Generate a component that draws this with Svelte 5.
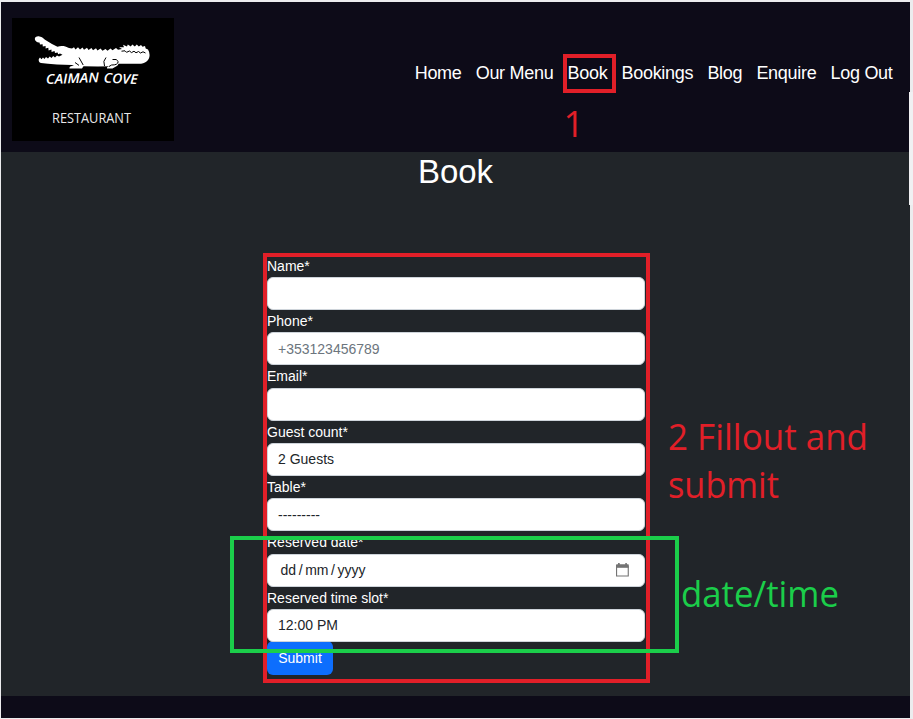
<script>
  const links = ['Home', 'Our Menu', 'Book', 'Bookings', 'Blog', 'Enquire', 'Log Out'];
  const fields = [
    { label: 'Name*', value: '' },
    { label: 'Phone*', value: '+353123456789', kind: 'placeholder' },
    { label: 'Email*', value: '' },
    { label: 'Guest count*', value: '2 Guests' },
    { label: 'Table*', value: '---------' },
    { label: 'Reserved date*', value: 'dd / mm / yyyy', kind: 'date' },
    { label: 'Reserved time slot*', value: '12:00 PM' }
  ];
</script>

<div class="frame">
  <div class="page">
    <header>
      <svg class="logo" width="162" height="123" viewBox="12 18 162 123" aria-label="Caiman Cove Restaurant">
        <rect x="12" y="18" width="162" height="123" fill="#000" />
        <path fill="#fff" d="M34.8 39C34.8 36.8 37 36 39.5 36.4C42.5 36.6 43.3 38.6 45 39.7L52 44L57.5 46.8C60.5 45.4 65 45.6 69 48L72 48.5L74 47.3L75.5 49.4L78 47.3L80 49.4L82.5 47.5L84 49.7L87 47.7L88.5 50L91.5 48L93 50.3L96 48.2L97.5 50.5L100.5 48.6L102.5 50.8L105.5 48.9L107.5 50.7L110.5 48.4L112.5 50.3L116 48L118 49.7L122 49L119 47.2L124 47.3L123 44.8L127 46.5L127.8 44.6L130.8 46.4L132.3 44.6L134.8 46.4L136.8 44.6L138.8 46.4L141 44.9L142.5 46.8L145 46.1L145.7 48.4L148 49.4Q149.6 52 149.6 55C149.6 60.5 145 63.8 139 63.8L118.5 63.8C118 66.2 115.5 66.5 112.5 68.6L107 68.4C106.5 67 108 66.4 110 66.2L98 66.6L83.5 66.2L82 68.6L69.5 68.6C69 67 70.6 66 74 65.6L72 65L57 64.6L48 63.8L41 63C39 62.6 38.4 60.7 38.8 59L40 57.6L41.5 59.3L43 57.4L44.5 59L46 57L48 58.6L49.7 56.5L51.5 58L53.2 56L55 57.4L57 55.4L59 56.4L62.5 54.8L60 53.6L58.2 54.2L57.6 52.4L55 53L54.5 50.9L51.6 52L51.4 49.6L48.6 50.4L48.3 47.8L45.6 48.6L45.6 46L42.8 46.6L42.6 44.2L40 44.6L39.5 42.4C37.5 42.8 35.2 41.4 34.8 39Z" />
        <path d="M79 57.5L83.2 65M75 62.5L79 65.4M106 57.5Q102.5 61 104.5 66M112.5 59.5Q117 58.5 118.2 61.5Q118 65.2 111.5 65L109 66.5M121.5 51.2L125 50.8L126.5 52.3L129.5 51L131.5 52.6L134 51.2L136 52.8L138.5 51.5L140.5 53L143 51.8L145.5 53" fill="none" stroke="#000" stroke-width="1" />
        <text class="cove" x="46" y="84" textLength="53" lengthAdjust="spacingAndGlyphs" transform="rotate(-2 46 84)">CAIMAN</text>
        <text class="cove" x="103.5" y="82.6" textLength="34" lengthAdjust="spacingAndGlyphs" transform="rotate(2.5 103 82)">COVE</text>
        <text class="restaurant" x="52" y="123.2" textLength="79" lengthAdjust="spacingAndGlyphs">RESTAURANT</text>
      </svg>
      <nav>
        {#each links as link}<span>{link}</span>{/each}
      </nav>
    </header>
    <main>
      <h1>Book</h1>
      <form>
        {#each fields as field}
          <div class="group">
            <div class="label">{field.label}</div>
            <div class="control {field.kind ?? ''}">
              <span>{field.value}</span>
              {#if field.kind === 'date'}
                <svg width="13" height="14" viewBox="0 0 14 15"><path d="M.6 4H13.2V14H.6Z" fill="none" stroke="#747474" stroke-width="1.2" /><path d="M0 2Q0 1.2 1 1.2H2.2V0H4V1.2H10V0H11.7V1.2H13Q13.8 1.2 13.8 2V5H0Z" fill="#747474" /></svg>
              {/if}
            </div>
          </div>
        {/each}
        <button type="button">Submit</button>
      </form>
    </main>
    <footer></footer>
  </div>
  <div class="scroll"></div>
  <svg class="notes" width="913" height="719">
    <g fill="none" stroke-width="4">
      <rect x="565" y="56" width="49" height="35" stroke="#e11f28" />
      <rect x="265" y="255" width="383" height="426" stroke="#e11f28" />
      <rect x="232" y="538" width="445" height="113" stroke="#1bce4a" />
    </g>
    <g class="note" fill="#e11f28">
      <text x="563.5" y="137">1</text>
      <text x="668" y="450" textLength="200" lengthAdjust="spacingAndGlyphs">2 Fillout and</text>
      <text x="668" y="498" textLength="111" lengthAdjust="spacingAndGlyphs">submit</text>
      <text x="681" y="607" fill="#1bce4a" textLength="158" lengthAdjust="spacingAndGlyphs">date/time</text>
    </g>
  </svg>
</div>

<style>
  :global(body) { margin: 0; overflow: hidden; }
  .frame { position: relative; box-sizing: border-box; width: 913px; height: 719px; padding: 2px 3px 1px 1px; background: #ececee; overflow: hidden; font-family: "Liberation Sans", Arial, sans-serif; color: #fff; }
  .page { display: flex; flex-direction: column; height: 716px; }
  header { box-sizing: border-box; height: 150px; flex: none; display: flex; justify-content: space-between; align-items: flex-start; padding: 16px 17.5px 0 11px; background: #0d0b18; }
  .logo { display: block; }
  .cove { font: italic 600 13.5px "Open Sans", sans-serif; fill: #fff; }
  .restaurant { font: 13.7px "Open Sans", sans-serif; fill: #e8e8e8; }
  nav { display: flex; gap: 14.2px; padding-top: 44px; font-size: 18px; line-height: 22px; letter-spacing: -0.3px; white-space: nowrap; }
  main { height: 544px; flex: none; background: #212529; }
  h1 { margin: 0; box-sizing: border-box; height: 102px; padding-top: 1px; text-align: center; font-size: 33px; line-height: 38px; font-weight: 400; }
  form { width: 378px; margin-left: 266px; }
  .group { height: 55.33px; display: flex; flex-direction: column; }
  .label { box-sizing: border-box; height: 23px; line-height: 22px; font-size: 14px; flex: none; padding-top: 0.8px; }
  .control { box-sizing: border-box; height: 33px; flex: none; display: flex; align-items: center; justify-content: space-between; padding: 0 15px 0 10px; border: 1px solid #ced4da; border-radius: 6px; background: #fff; color: #212529; font-size: 14px; }
  .placeholder { color: #6c757d; }
  .date { padding-left: 12.5px; word-spacing: -1.3px; }
  button { display: block; width: 66px; height: 33.5px; margin: 0; padding: 0; border: 0; border-radius: 6px; background: #0d6efd; color: #fff; font: 14px "Liberation Sans", Arial, sans-serif; }
  footer { flex: 1; background: #0d0b18; }
  .scroll { position: absolute; right: 0; top: 92px; width: 4px; height: 113px; background: #f0f0f2; }
  .notes { position: absolute; inset: 0; }
  .note { font: 36px "Open Sans", "Noto Sans", sans-serif; }
</style>
